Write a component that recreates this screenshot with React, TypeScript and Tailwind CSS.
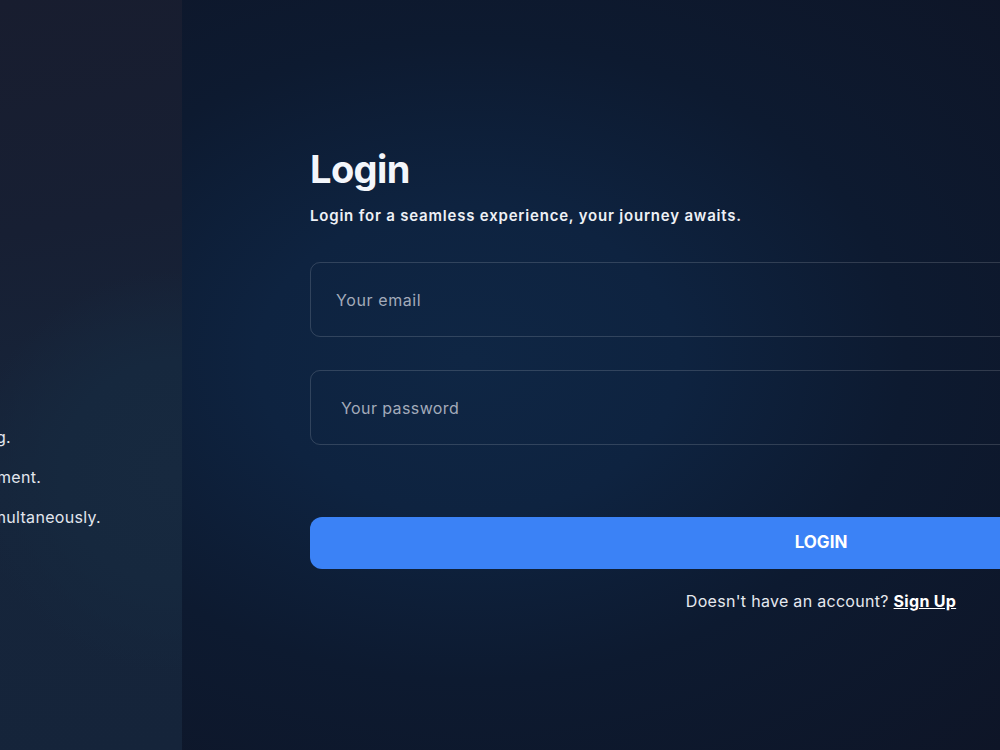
import React from "react";

export default function App() {
  return (
    <div className="flex h-[750px] w-[1000px] overflow-hidden font-['Inter',sans-serif] text-white">
      <aside className="w-[182px] shrink-0 bg-[radial-gradient(circle_at_95%_63%,#17293f_0%,#16283e_22%,rgba(22,38,60,0)_40%),linear-gradient(170deg,#181d2f_0%,#171f33_30%,#16253b_60%,#15243a_100%)] pt-[425px] flex flex-col gap-[16px] overflow-hidden">
        <p className="-ml-[4px] text-[16px] leading-[24px] tracking-[0.3px] text-[#e2e6ee] whitespace-nowrap">g.</p>
        <p className="-ml-[3px] text-[16px] leading-[24px] tracking-[0.3px] text-[#e2e6ee] whitespace-nowrap">ment.</p>
        <p className="-ml-[8px] text-[16px] leading-[24px] tracking-[0.3px] text-[#e2e6ee] whitespace-nowrap">multaneously.</p>
      </aside>
      <main className="flex-1 min-w-0 bg-[radial-gradient(ellipse_at_35%_48%,#0f2644_0%,#0e2340_28%,#0d1a30_58%,#0e1527_100%)] pl-[128px] pt-[146px]">
        <div className="w-[1022px] shrink-0 flex flex-col">
          <h1 className="text-[38px] leading-[46px] font-bold text-[#f3f6fb] tracking-[-0.6px]">Login</h1>
          <p className="mt-[13px] text-[15px] leading-[22px] font-semibold tracking-[0.8px] text-[#eef1f6]">
            Login for a seamless experience, your journey awaits.
          </p>
          <input
            type="email"
            placeholder="Your email"
            className="mt-[35px] h-[75px] w-full rounded-[10px] border border-white/15 bg-transparent px-[25px] text-[16px] tracking-[0.6px] text-white outline-none placeholder:text-[#a3abba]"
          />
          <input
            type="password"
            placeholder="Your password"
            className="mt-[33px] h-[75px] w-full rounded-[10px] border border-white/15 bg-transparent px-[30px] text-[16px] tracking-[0.4px] text-white outline-none placeholder:text-[#a3abba]"
          />
          <button className="mt-[72px] h-[52px] w-full rounded-[12px] bg-[#3b82f6] text-[17px] font-bold text-white">
            LOGIN
          </button>
          <p className="mt-[20px] text-center text-[16px] leading-[24px] tracking-[0.3px] text-[#e6e9ef]">
            Doesn't have an account?{" "}
            <a href="#" className="font-bold underline text-white">Sign Up</a>
          </p>
        </div>
      </main>
    </div>
  );
}
